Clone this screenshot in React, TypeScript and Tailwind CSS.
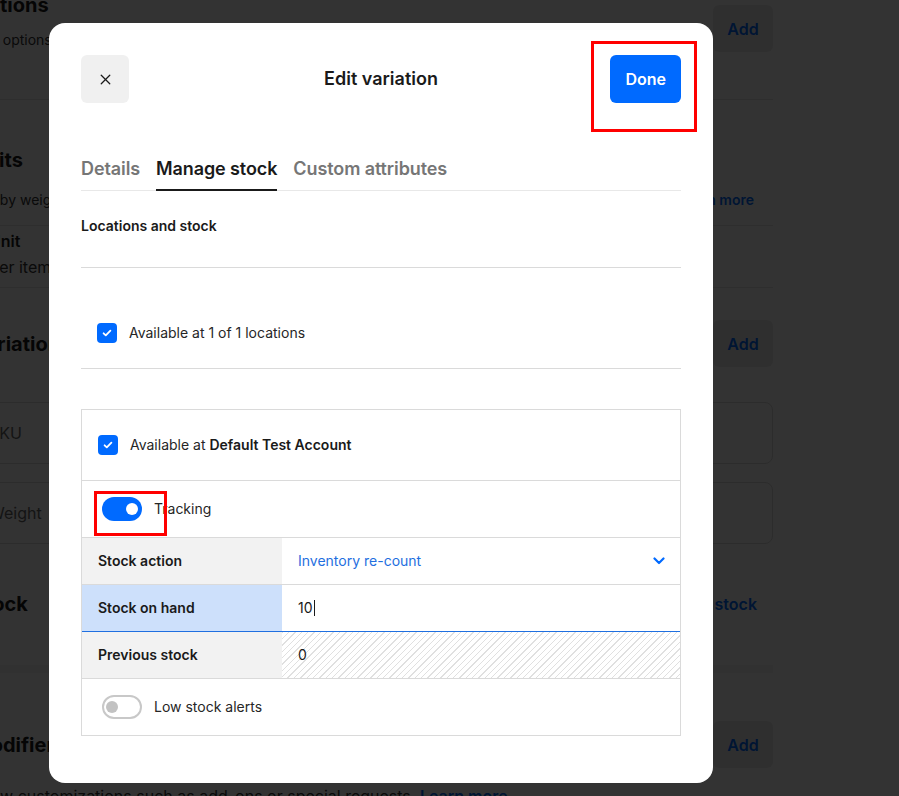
import React from 'react';
import { X } from 'lucide-react';

function CheckBox() {
  return (
    <span className="flex h-5 w-5 shrink-0 items-center justify-center rounded-[4px] bg-[#006aff]">
      <svg width="12" height="12" viewBox="0 0 12 12" fill="none">
        <path d="M2.6 6.3l2.2 2.1L9.4 3.7" stroke="white" strokeWidth="1.8" strokeLinecap="round" strokeLinejoin="round" />
      </svg>
    </span>
  );
}

function Toggle({ on }: { on: boolean }) {
  if (on) {
    return (
      <span className="flex h-6 w-10 shrink-0 items-center justify-end rounded-full bg-[#006aff] pr-[4px]">
        <span className="h-3 w-3 rounded-full bg-white" />
      </span>
    );
  }
  return (
    <span className="flex h-6 w-10 shrink-0 items-center rounded-full border-2 border-[#c8c8c8] bg-white pl-[2px]">
      <span className="h-3 w-3 rounded-full bg-[#c2c2c2]" />
    </span>
  );
}

function AddButton() {
  return (
    <div className="flex h-[47px] w-[60px] items-center justify-center rounded-md bg-[#ececec] text-base font-semibold text-[#006aff]">
      Add
    </div>
  );
}

// the item page that sits dimmed behind the dialog
function ItemPage() {
  return (
    <div className="ml-[-28px] w-[801px]">
      <div className="mt-[-18px] flex h-[118px] justify-between border-b border-[#e5e5e5]">
        <div className="pt-[11px]">
          <div className="text-xl font-bold leading-6">Options</div>
          <div className="mt-[13px] text-sm leading-5 text-[#333]">Add options such as size or color.</div>
        </div>
        <div className="mt-[23px]">
          <AddButton />
        </div>
      </div>

      <div className="pt-[48px]">
        <div className="text-xl font-bold leading-6">Units</div>
        <div className="mt-[18px] flex justify-between pr-[19px] text-sm leading-5">
          <span className="text-[#333]">Sell by weight, volume or time with additional measurements.</span>
          <span className="font-semibold text-[#006aff]">Learn more</span>
        </div>
      </div>
      <div className="mt-[15px] h-[63px] border-y border-[#e5e5e5] pl-[17px] pt-[5px]">
        <div className="text-base font-semibold leading-5">Unit</div>
        <div className="mt-[6px] text-base leading-5 text-[#333]">Per item</div>
      </div>

      <div className="flex justify-between pt-[32px]">
        <div className="pt-[12px] text-xl font-bold leading-6">Variations</div>
        <AddButton />
      </div>
      <div className="mt-[35px] flex h-[62px] items-center rounded-lg border border-[#d9d9d9] pl-4 text-base text-[#666]">SKU</div>
      <div className="mt-[18px] flex h-[62px] items-center rounded-lg border border-[#d9d9d9] pl-4 text-base text-[#666]">Weight</div>

      <div className="mt-[48px] flex justify-between pr-4">
        <div className="text-xl font-bold leading-6">Stock</div>
        <div className="text-base font-semibold leading-6 text-[#006aff]">Edit stock</div>
      </div>
      <div className="mt-[49px] h-2 bg-[#f2f2f2]" />

      <div className="mt-[48px] flex justify-between">
        <div className="pt-[12px] text-xl font-bold leading-6">Modifiers</div>
        <AddButton />
      </div>
      <div className="mt-[16px] text-base leading-6 text-[#333]">
        Allow customizations such as add-ons or special requests. <span className="font-semibold text-[#006aff]">Learn more</span>
      </div>
    </div>
  );
}

function StockRow({
  label,
  labelBg,
  border,
  valueBg,
  children,
}: {
  label: string;
  labelBg: string;
  border: string;
  valueBg: string;
  children: React.ReactNode;
}) {
  return (
    <div className={`flex h-[47px] border-b ${border}`}>
      <div className={`flex w-[200px] items-center pl-4 text-sm font-semibold text-[#1a1a1a] ${labelBg}`}>{label}</div>
      <div className={`flex flex-1 items-center pl-4 pr-[15px] text-sm ${valueBg}`}>{children}</div>
    </div>
  );
}

export default function App() {
  return (
    <div className="relative h-[796px] w-full overflow-hidden bg-white font-['Inter',sans-serif] text-[#1a1a1a]">
      <ItemPage />

      <div className="absolute inset-0 bg-black/80" />

      <div className="absolute left-[49px] top-[23px] h-[760px] w-[664px] rounded-2xl bg-white px-8 pt-8">
        <div className="grid h-12 grid-cols-[1fr_auto_1fr] items-center">
          <div className="flex h-12 w-12 items-center justify-center rounded-md bg-[#f0f0f0]">
            <X size={17} strokeWidth={1.8} className="text-[#1a1a1a]" />
          </div>
          <div className="text-lg font-semibold">Edit variation</div>
          <div className="flex justify-end">
            <div className="flex h-12 items-center rounded-md bg-[#006aff] px-[15px] text-base font-semibold text-white">Done</div>
          </div>
        </div>

        <div className="mt-[54px] flex gap-4 border-b border-[#e8e8e8] text-lg font-semibold leading-6 tracking-[-0.1px]">
          <div className="-mb-px border-b-2 border-transparent pb-2 text-[#767676]">Details</div>
          <div className="-mb-px border-b-2 border-[#1a1a1a] pb-2 text-[#1a1a1a]">Manage stock</div>
          <div className="-mb-px border-b-2 border-transparent pb-2 text-[#767676]">Custom attributes</div>
        </div>

        <div className="h-[77px] border-b border-[#dadada] pt-[25px] text-sm font-semibold leading-5">Locations and stock</div>

        <div className="flex h-[101px] items-start gap-3 border-b border-[#dadada] pl-4 pt-[55px] text-sm leading-5 text-[#262626]">
          <CheckBox />
          <span>Available at 1 of 1 locations</span>
        </div>

        <div className="mt-[40px] border border-[#dadada]">
          <div className="flex h-[71px] items-center gap-3 border-b border-[#dadada] pl-4 text-sm text-[#262626]">
            <CheckBox />
            <span>
              Available at <span className="font-semibold text-[#1a1a1a]">Default Test Account</span>
            </span>
          </div>
          <div className="flex h-[57px] items-center gap-3 border-b border-[#dadada] pl-5 text-sm text-[#262626]">
            <Toggle on />
            <span>Tracking</span>
          </div>

          <StockRow label="Stock action" labelBg="bg-[#f2f2f2]" border="border-[#dadada]" valueBg="bg-white">
            <span className="flex-1 text-[#1f6fe0]">Inventory re-count</span>
            <svg width="12" height="8" viewBox="0 0 12 8" fill="none">
              <path d="M1.5 1.5L6 6l4.5-4.5" stroke="#006aff" strokeWidth="2.2" strokeLinecap="round" strokeLinejoin="round" />
            </svg>
          </StockRow>
          <StockRow label="Stock on hand" labelBg="bg-[#cde0fb]" border="border-[#1f6fe0]" valueBg="bg-white">
            <span className="text-[#1a1a1a]">10</span>
            <span className="ml-px h-4 w-px bg-[#1a1a1a]" />
          </StockRow>
          <StockRow
            label="Previous stock"
            labelBg="bg-[#f2f2f2]"
            border="border-[#dadada]"
            valueBg="bg-[repeating-linear-gradient(135deg,#e0e0e0_0px,#e0e0e0_1px,transparent_1px,transparent_4.5px)]"
          >
            <span className="text-[#1a1a1a]">0</span>
          </StockRow>

          <div className="flex h-[56px] items-center gap-3 pl-5 text-sm text-[#262626]">
            <Toggle on={false} />
            <span>Low stock alerts</span>
          </div>
        </div>
      </div>

      {/* annotation marks drawn over the screenshot */}
      <div className="absolute left-[591px] top-[41px] h-[91px] w-[106px] border-[3px] border-[#ff0000]" />
      <div className="absolute left-[94px] top-[491px] h-[45px] w-[73px] border-[3px] border-[#ff0000]" />
    </div>
  );
}
